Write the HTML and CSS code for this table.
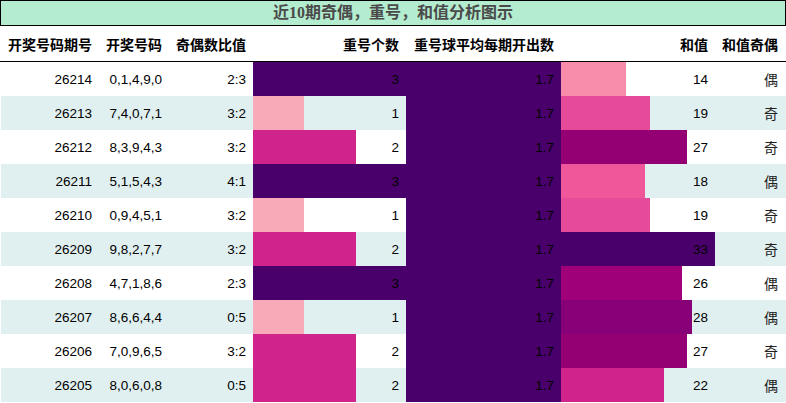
FILE: index.html
```html
<!DOCTYPE html>
<html lang="zh">
<head>
<meta charset="utf-8">
<title>近10期奇偶，重号，和值分析图示</title>
<link rel="stylesheet" href="styles.css">
</head>
<body>
<div class="chart">
  <div class="title">近10期奇偶，重号，和值分析图示</div>
  <div class="row head">
    <div class="cell">开奖号码期号</div>
    <div class="cell">开奖号码</div>
    <div class="cell">奇偶数比值</div>
    <div class="cell">重号个数</div>
    <div class="cell">重号球平均每期开出数</div>
    <div class="cell">和值</div>
    <div class="cell">和值奇偶</div>
  </div>
  <div class="row">
    <div class="cell">26214</div><div class="cell">0,1,4,9,0</div><div class="cell">2:3</div>
    <div class="cell bar" style="--w:100%;--c:#4a006a">3</div>
    <div class="cell bar avg">1.7</div>
    <div class="cell bar sum" style="--w:42.4%;--c:#f78cab">14</div>
    <div class="cell cjk">偶</div>
  </div>
  <div class="row alt">
    <div class="cell">26213</div><div class="cell">7,4,0,7,1</div><div class="cell">3:2</div>
    <div class="cell bar" style="--w:33.33%;--c:#f8aab8">1</div>
    <div class="cell bar avg">1.7</div>
    <div class="cell bar sum" style="--w:57.6%;--c:#e64b9a">19</div>
    <div class="cell cjk">奇</div>
  </div>
  <div class="row">
    <div class="cell">26212</div><div class="cell">8,3,9,4,3</div><div class="cell">3:2</div>
    <div class="cell bar" style="--w:67%;--c:#d0238c">2</div>
    <div class="cell bar avg">1.7</div>
    <div class="cell bar sum" style="--w:81.8%;--c:#940074">27</div>
    <div class="cell cjk">奇</div>
  </div>
  <div class="row alt">
    <div class="cell">26211</div><div class="cell">5,1,5,4,3</div><div class="cell">4:1</div>
    <div class="cell bar" style="--w:100%;--c:#4a006a">3</div>
    <div class="cell bar avg">1.7</div>
    <div class="cell bar sum" style="--w:54.5%;--c:#f0579b">18</div>
    <div class="cell cjk">偶</div>
  </div>
  <div class="row">
    <div class="cell">26210</div><div class="cell">0,9,4,5,1</div><div class="cell">3:2</div>
    <div class="cell bar" style="--w:33.33%;--c:#f8aab8">1</div>
    <div class="cell bar avg">1.7</div>
    <div class="cell bar sum" style="--w:57.6%;--c:#e64b9a">19</div>
    <div class="cell cjk">奇</div>
  </div>
  <div class="row alt">
    <div class="cell">26209</div><div class="cell">9,8,2,7,7</div><div class="cell">3:2</div>
    <div class="cell bar" style="--w:67%;--c:#d0238c">2</div>
    <div class="cell bar avg">1.7</div>
    <div class="cell bar sum" style="--w:100%;--c:#4a006a">33</div>
    <div class="cell cjk">奇</div>
  </div>
  <div class="row">
    <div class="cell">26208</div><div class="cell">4,7,1,8,6</div><div class="cell">2:3</div>
    <div class="cell bar" style="--w:100%;--c:#4a006a">3</div>
    <div class="cell bar avg">1.7</div>
    <div class="cell bar sum" style="--w:78.8%;--c:#9f0079">26</div>
    <div class="cell cjk">偶</div>
  </div>
  <div class="row alt">
    <div class="cell">26207</div><div class="cell">8,6,6,4,4</div><div class="cell">0:5</div>
    <div class="cell bar" style="--w:33.33%;--c:#f8aab8">1</div>
    <div class="cell bar avg">1.7</div>
    <div class="cell bar sum" style="--w:84.8%;--c:#880077">28</div>
    <div class="cell cjk">偶</div>
  </div>
  <div class="row">
    <div class="cell">26206</div><div class="cell">7,0,9,6,5</div><div class="cell">3:2</div>
    <div class="cell bar" style="--w:67%;--c:#d0238c">2</div>
    <div class="cell bar avg">1.7</div>
    <div class="cell bar sum" style="--w:81.8%;--c:#940074">27</div>
    <div class="cell cjk">奇</div>
  </div>
  <div class="row alt">
    <div class="cell">26205</div><div class="cell">8,0,6,0,8</div><div class="cell">0:5</div>
    <div class="cell bar" style="--w:67%;--c:#d0238c">2</div>
    <div class="cell bar avg">1.7</div>
    <div class="cell bar sum" style="--w:66.7%;--c:#d0238c">22</div>
    <div class="cell cjk">偶</div>
  </div>
</div>
</body>
</html>
```

FILE: styles.css
```css
* { box-sizing: border-box; }
html, body { margin: 0; padding: 0; background: #fff; }
body {
  font-family: "Liberation Sans", "Noto Sans CJK SC", sans-serif;
  font-size: 13.5px;
  color: #000;
}
.chart { width: 786px; }
.title {
  height: 26px;
  border: 1px solid #000;
  background: #b4ecd0;
  color: #4a4a4a;
  font-family: "Liberation Serif", "Noto Sans CJK SC", serif;
  font-weight: bold;
  font-size: 16px;
  line-height: 24px;
  text-align: center;
}
.row {
  display: grid;
  grid-template-columns: 98px 70px 84px 153px 155px 154px 70px;
  height: 34px;
  margin-left: 1px;
}
.row.alt { background: #e0f0f0; }
.row.head {
  height: 36px;
  border-bottom: 1px solid #000;
  margin-left: 0;
  padding-left: 1px;
  font-family: "Noto Sans CJK SC", sans-serif;
  font-weight: bold;
  font-size: 14px;
}
.cell {
  display: flex;
  align-items: center;
  justify-content: flex-end;
  padding-right: 7px;
  white-space: nowrap;
}
.head .cell { padding-top: 1px; }
.bar {
  background: linear-gradient(90deg, var(--c) var(--w), transparent var(--w));
}
.avg { --c: #4a006a; --w: 100%; }
.cjk {
  font-family: "Noto Sans CJK SC", sans-serif;
  font-size: 14px;
  color: #222;
}
```
